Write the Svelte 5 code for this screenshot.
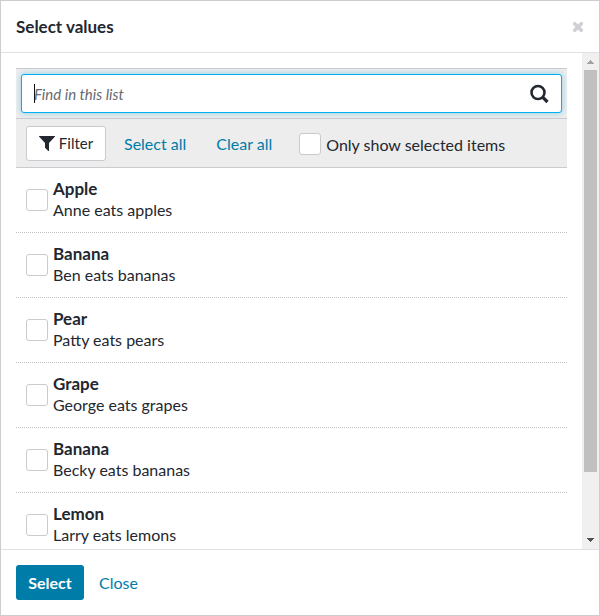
<script>
  let items = $state([
    { name: 'Apple', note: 'Anne eats apples', checked: false },
    { name: 'Banana', note: 'Ben eats bananas', checked: false },
    { name: 'Pear', note: 'Patty eats pears', checked: false },
    { name: 'Grape', note: 'George eats grapes', checked: false },
    { name: 'Banana', note: 'Becky eats bananas', checked: false },
    { name: 'Lemon', note: 'Larry eats lemons', checked: false }
  ]);
  let query = $state('');
  let onlySelected = $state(false);

  const visible = $derived(
    items.filter(
      (item) =>
        (!onlySelected || item.checked) &&
        `${item.name} ${item.note}`.toLowerCase().includes(query.toLowerCase())
    )
  );

  function setAll(value) {
    for (const item of items) item.checked = value;
  }
</script>

<div class="dialog" role="dialog" aria-labelledby="dialog-title">
  <header>
    <h1 id="dialog-title">Select values</h1>
    <button class="dismiss" aria-label="Dismiss">
      <svg width="12" height="12" viewBox="0 0 12 12">
        <path d="M2.7 2.7l6.6 6.6M9.3 2.7L2.7 9.3" stroke="#cfd0d4" stroke-width="3.6" stroke-linecap="round" />
      </svg>
    </button>
  </header>

  <div class="body">
    <div class="content">
      <div class="search">
        <div class="field">
          <input type="text" placeholder="Find in this list" aria-label="Find in this list" bind:value={query} />
          {#if !query}<span class="caret"></span>{/if}
          <button class="find" aria-label="Search">
            <svg width="19" height="21" viewBox="0 0 19 21" fill="none" stroke="#23272f">
              <circle cx="8" cy="9.5" r="6.5" stroke-width="2.6" />
              <path d="M12.9 14.4l4.6 4.6" stroke-width="3.2" />
            </svg>
          </button>
        </div>
      </div>

      <div class="tools">
        <button class="filter">
          <svg width="16" height="16" viewBox="0 0 16 16">
            <path d="M.5 1h15a.4.4 0 0 1 .3.8L10 8v7.6a.4.4 0 0 1-.7.3L6.3 13a.8.8 0 0 1-.3-.6V8L.2 1.8A.4.4 0 0 1 .5 1z" fill="#23272f" />
          </svg>
          Filter
        </button>
        <button class="link" onclick={() => setAll(true)}>Select all</button>
        <button class="link" onclick={() => setAll(false)}>Clear all</button>
        <label class="only">
          <input type="checkbox" bind:checked={onlySelected} />
          Only show selected items
        </label>
      </div>

      <ul>
        {#each visible as item}
          <li>
            <label>
              <input type="checkbox" bind:checked={item.checked} />
              <span class="text">
                <strong>{item.name}</strong>
                <span>{item.note}</span>
              </span>
            </label>
          </li>
        {/each}
      </ul>
    </div>

    <div class="scrollbar" aria-hidden="true">
      <svg class="arrow" width="17" height="17" viewBox="0 0 17 17" shape-rendering="crispEdges">
        <path d="M5 11h7v-1h-1V9h-1V8H9V7H8v1H7v1H6v1H5z" fill="#a3a3a3" />
      </svg>
      <div class="track"><div class="thumb"></div></div>
      <svg class="arrow" width="17" height="17" viewBox="0 0 17 17" shape-rendering="crispEdges">
        <path d="M5 6h7v1h-1v1h-1v1H9v1H8V9H7V8H6V7H5z" fill="#505050" />
      </svg>
    </div>
  </div>

  <footer>
    <button class="primary">Select</button>
    <button class="link">Close</button>
  </footer>
</div>

<style>
  .dialog,
  .dialog * {
    box-sizing: border-box;
  }

  .dialog {
    display: flex;
    flex-direction: column;
    height: 100vh;
    border: 1px solid #cdcdd1;
    background: #fff;
    color: #23272f;
    font: 16px/21px Lato, 'Noto Sans', sans-serif;
  }

  button,
  input {
    margin: 0;
    font: inherit;
    color: inherit;
  }

  button {
    border: 0;
    padding: 0;
    background: none;
    cursor: pointer;
    white-space: nowrap;
  }

  svg {
    display: block;
    flex: none;
  }

  header {
    flex: none;
    display: flex;
    align-items: center;
    justify-content: space-between;
    height: 52px;
    padding: 0 15px;
    border-bottom: 1px solid #e1e1e3;
  }

  h1 {
    margin: 0;
    font-size: 17px;
    line-height: 21px;
    font-weight: 700;
  }

  .body {
    flex: 1;
    min-height: 0;
    display: flex;
  }

  .content {
    flex: 1;
    min-width: 0;
    overflow: hidden;
    padding: 15px 15px 0;
  }

  .search {
    padding: 5px;
    border-top: 1px solid #cbcbcf;
    border-bottom: 1px solid #cbcbcf;
    background: #ededed;
  }

  .field {
    position: relative;
    display: flex;
    align-items: center;
    height: 39px;
    padding: 0 12px;
    border: 1px solid #00b0f0;
    border-radius: 3px;
    background: #fff;
    box-shadow: 0 0 6px rgba(0, 160, 215, 0.4);
  }

  .field input {
    flex: 1;
    min-width: 0;
    border: 0;
    padding: 0;
    outline: 0;
    background: none;
    font-size: 15px;
    line-height: 22px;
  }

  .field input::placeholder {
    color: #686a70;
    opacity: 1;
    font-style: italic;
  }

  .caret {
    position: absolute;
    left: 12px;
    top: 9px;
    width: 1px;
    height: 19px;
    background: #111;
  }

  .tools {
    display: flex;
    align-items: center;
    height: 49px;
    padding: 0 10px;
    border-bottom: 1px solid #cbcbcf;
    background: #ededed;
  }

  .filter {
    display: flex;
    align-items: center;
    justify-content: center;
    gap: 4px;
    width: 80px;
    height: 35px;
    border: 1px solid #cbcbcf;
    border-radius: 3px;
    background: #fff;
    font-size: 15px;
    line-height: 22px;
  }

  .link {
    color: #007ca8;
  }

  .tools .link {
    margin-left: 18px;
  }

  .tools .link + .link {
    margin-left: 30px;
  }

  .only {
    display: flex;
    align-items: center;
    gap: 5px;
    margin-left: 27px;
    padding-top: 2px;
    white-space: nowrap;
  }

  input[type='checkbox'] {
    appearance: none;
    flex: none;
    width: 22px;
    height: 22px;
    border: 1px solid #cbcbcf;
    border-radius: 3px;
    background: #fff;
  }

  input[type='checkbox']:checked {
    background: #007ca8;
    box-shadow: inset 0 0 0 4px #fff;
  }

  ul {
    margin: 0;
    padding: 0;
    list-style: none;
  }

  li {
    border-bottom: 1px dotted #c0c0c4;
  }

  li label {
    display: flex;
    align-items: center;
    gap: 5px;
    height: 64px;
    padding: 0 10px;
  }

  .text {
    display: flex;
    flex-direction: column;
    padding-bottom: 2px;
  }

  .text strong {
    font-size: 17px;
  }

  .scrollbar {
    flex: none;
    display: flex;
    flex-direction: column;
    width: 17px;
    background: #f0f0f0;
  }

  .track {
    flex: 1;
    padding: 0 2px;
  }

  .thumb {
    height: 87%;
    background: #c0c0c0;
  }

  footer {
    flex: none;
    display: flex;
    align-items: center;
    gap: 15px;
    height: 66px;
    padding: 0 15px;
    border-top: 1px solid #e1e1e3;
  }

  .primary {
    height: 35px;
    width: 68px;
    border-radius: 3px;
    background: #007ca8;
    color: #fff;
    font-weight: 700;
  }
</style>
